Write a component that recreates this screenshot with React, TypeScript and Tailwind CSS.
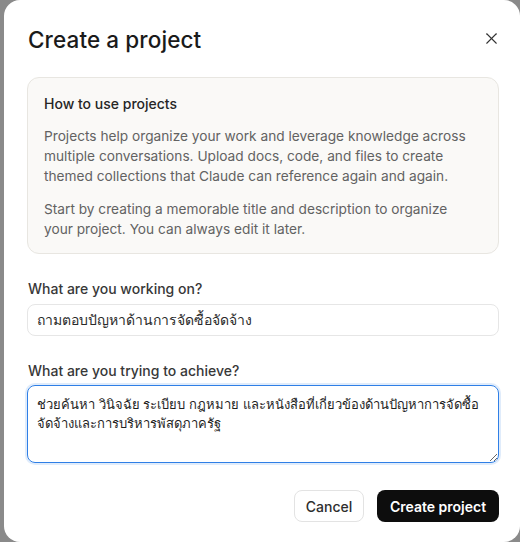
import { X } from "lucide-react";

export default function App() {
  return (
    <div
      className="min-h-screen w-full bg-[#8a8a8a] flex"
      style={{ fontFamily: "Inter, 'Noto Sans', Tahoma, sans-serif" }}
    >
      <div className="ml-[4px] w-[516px] h-[542px] bg-white rounded-2xl pl-[23px] pr-[21px] pt-[26px] flex flex-col">
        <div className="flex items-center justify-between">
          <h1 className="text-[22.5px] leading-[28px] font-medium text-[#1a1a1a] tracking-[0.1px] pl-[1px]">
            Create a project
          </h1>
          <button className="w-[20px] h-[20px] flex items-center justify-center text-[#333] -mr-[2px] -mt-[3px]">
            <X size={19} strokeWidth={1.4} />
          </button>
        </div>

        <div className="mt-[23px] border border-[#e8e6e1] bg-[#faf9f7] rounded-xl pl-4 pr-5 pt-4 pb-[14px]">
          <h2 className="text-[14px] leading-5 font-medium text-[#262626]">
            How to use projects
          </h2>
          <p className="mt-3 text-[13.7px] leading-5 text-[#626262]">
            Projects help organize your work and leverage knowledge across multiple
            conversations. Upload docs, code, and files to create themed collections
            that Claude can reference again and again.
          </p>
          <p className="mt-[13px] text-[13.7px] leading-5 text-[#626262]">
            Start by creating a memorable title and description to organize your
            project. You can always edit it later.
          </p>
        </div>

        <label className="mt-[25px] text-[14px] leading-5 font-medium text-[#383838] pl-[1px]">
          What are you working on?
        </label>
        <input
          className="mt-[5px] h-[32px] w-full rounded-lg border border-[#e6e6e6] px-[9px] text-[14px] text-[#2a2a2a] outline-none"
          defaultValue="ถามตอบปัญหาด้านการจัดซื้อจัดจ้าง"
        />

        <label className="mt-[25px] text-[14px] leading-5 font-medium text-[#383838] pl-[1px]">
          What are you trying to achieve?
        </label>
        <textarea
          className="mt-[4px] h-[78px] w-full rounded-lg border border-[#2f7fe6] ring-2 ring-[#2f7fe6]/15 px-[9px] pt-[9px] text-[13px] leading-[19px] text-[#1f1f1f] outline-none"
          defaultValue="ช่วยค้นหา วินิจฉัย ระเบียบ กฎหมาย และหนังสือที่เกี่ยวข้องด้านปัญหาการจัดซื้อจัดจ้างและการบริหารพัสดุภาครัฐ"
        />

        <div className="mt-[27px] flex justify-end gap-[13px]">
          <button className="h-[32px] w-[70px] rounded-lg border border-[#e3e3e3] bg-white text-[14px] font-medium text-[#2e2e2e]">
            Cancel
          </button>
          <button className="h-[32px] w-[122px] rounded-lg bg-[#0d0d0d] text-[14px] font-semibold text-white">
            Create project
          </button>
        </div>
      </div>
    </div>
  );
}
